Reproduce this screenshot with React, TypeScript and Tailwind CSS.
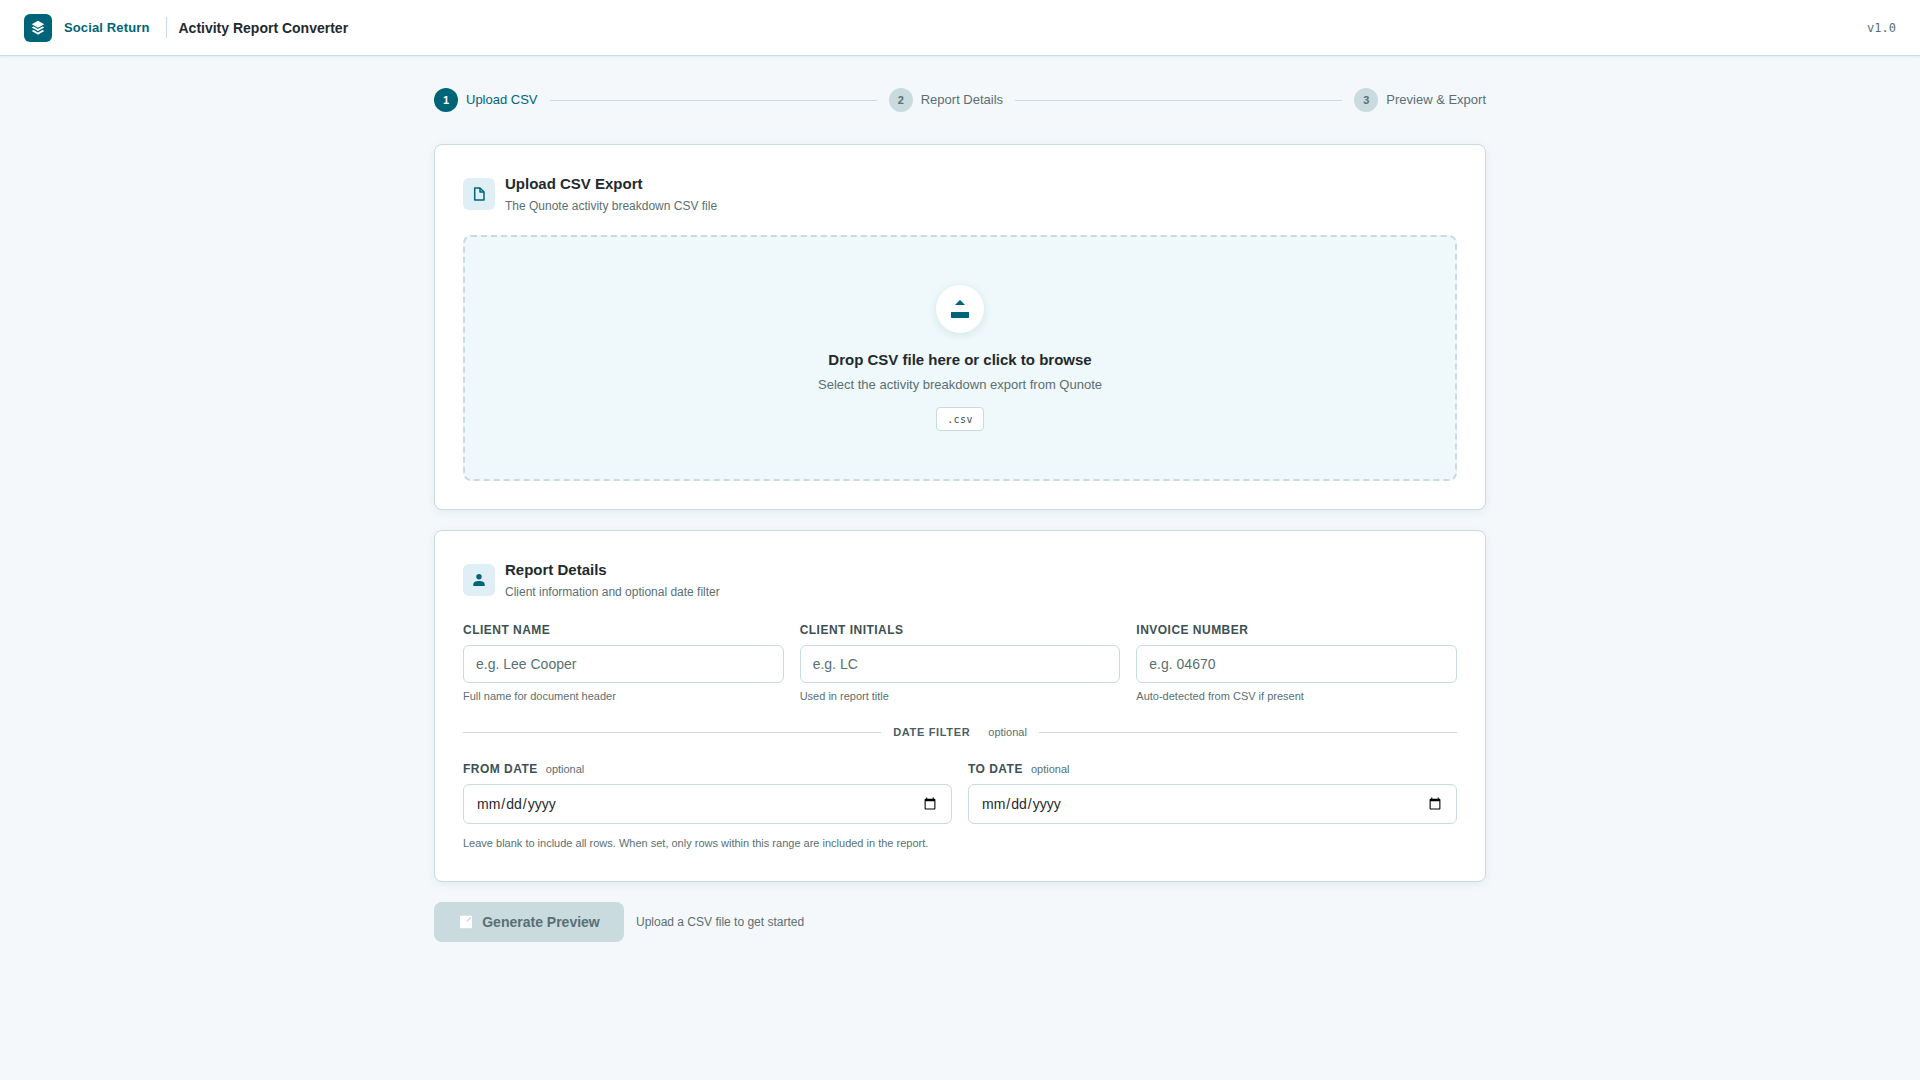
const font = { fontFamily: '"Liberation Sans", Arial, sans-serif' };
const mono = { fontFamily: '"DejaVu Sans Mono", monospace' };

function LogoIcon() {
	return (
		<svg width="16" height="16" viewBox="0 0 16 16" fill="#fff">
			<path d="M8 .7 14.3 4.2 8 7.7 1.7 4.2z" />
			<path d="M3.6 6.4 8 8.9l4.4-2.5 1.9 1.1L8 11.1 1.7 7.5z" />
			<path d="M3.6 9.9 8 12.4l4.4-2.5 1.9 1.1L8 14.7 1.7 11z" />
		</svg>
	);
}

function FileIcon() {
	return (
		<svg width="16" height="16" viewBox="0 0 16 16" fill="none" stroke="#006478" strokeWidth="1.5">
			<path d="M3.7 2h5.3l4 4v8H3.7z" strokeLinejoin="round" />
			<path d="M9 2v4h4" strokeLinejoin="round" />
		</svg>
	);
}

function PersonIcon() {
	return (
		<svg width="16" height="16" viewBox="0 0 16 16" fill="#006478">
			<circle cx="8" cy="4.7" r="2.7" />
			<path d="M2.3 14v-1.6C2.3 10 4.8 9 8 9s5.7 1 5.7 3.4V14z" />
		</svg>
	);
}

function UploadIcon() {
	return (
		<svg width="20" height="20" viewBox="0 0 20 20" fill="#006478">
			<path d="M9.4 1.4a.8.8 0 0 1 1.2 0L15 6H5z" />
			<path d="M1 13h18v5.2a.8.8 0 0 1-.8.8H1.8a.8.8 0 0 1-.8-.8z" />
		</svg>
	);
}

function PreviewIcon() {
	return (
		<svg width="14" height="14" viewBox="0 0 14 14">
			<rect x="1" y="0.7" width="12" height="12.6" rx="1" fill="#fff" />
			<path d="M7.5 6.5 12 2.5" stroke="#c9dbde" strokeWidth="1.4" />
		</svg>
	);
}

function Step({ n, label, active }: { n: number; label: string; active?: boolean }) {
	return (
		<div className="flex items-center gap-2">
			<div
				className={
					active
						? "flex h-6 w-6 items-center justify-center rounded-full bg-[#006478] text-[11px] font-bold text-white"
						: "flex h-6 w-6 items-center justify-center rounded-full bg-[#c9dbde] text-[11px] font-bold text-[#5a6f73]"
				}>
				{n}
			</div>
			<span className={active ? "text-[13px] text-[#006478]" : "text-[13px] text-[#5a6f73]"}>{label}</span>
		</div>
	);
}

function Card({ icon, title, sub, children }: { icon: React.ReactNode; title: string; sub: string; children: React.ReactNode }) {
	return (
		<section className="rounded-lg border border-[#c9dbde] bg-white p-7 shadow-[0_2px_8px_rgba(0,80,100,0.08)]">
			<div className="mb-5 flex items-center gap-[10px]">
				<div className="flex h-8 w-8 items-center justify-center rounded-md bg-[#e0eff5]">{icon}</div>
				<div>
					<h2 className="text-[15px] leading-[21px] font-bold text-[#1f2a2e]">{title}</h2>
					<p className="mt-[3px] text-xs leading-[18px] text-[#5a6f73]">{sub}</p>
				</div>
			</div>
			{children}
		</section>
	);
}

function TextField({ label, placeholder, hint }: { label: string; placeholder: string; hint: string }) {
	return (
		<div>
			<label className="mb-[6px] block text-xs leading-[18px] font-bold tracking-[0.04em] text-[#3d5054] uppercase">{label}</label>
			<input
				placeholder={placeholder}
				className="block h-[38px] w-full rounded-md border border-[#c9dbde] bg-white px-3 text-sm text-[#1f2a2e] outline-none placeholder:text-[#5a6f73]"
			/>
			<p className="mt-[6px] text-[11px] leading-[14px] text-[#5a6f73]">{hint}</p>
		</div>
	);
}

function DateField({ label }: { label: string }) {
	return (
		<div>
			<label className="mb-[6px] flex items-center gap-2 text-xs leading-[18px] font-bold tracking-[0.04em] text-[#3d5054]">
				<span className="uppercase">{label}</span>
				<span className="text-[11px] font-normal tracking-normal text-[#5a6f73]">optional</span>
			</label>
			<input
				type="date"
				className="block h-10 w-full rounded-md border border-[#c9dbde] bg-white px-3 text-sm text-[#1f2a2e] outline-none"
			/>
		</div>
	);
}

export default function App() {
	return (
		<div className="min-h-[1080px] bg-[#f4f8fb]" style={font}>
			<header className="flex h-14 items-center justify-between border-b border-[#c9dbde] bg-white px-6 shadow-[0_1px_3px_rgba(0,80,100,0.08)]">
				<div className="flex items-center">
					<div className="flex h-7 w-7 items-center justify-center rounded-md bg-[#006478]">
						<LogoIcon />
					</div>
					<span className="ml-3 text-[13px] font-bold tracking-[0.01em] text-[#006478]">Social Return</span>
					<div className="mr-3 ml-4 h-[21px] w-px bg-[#c9dbde]" />
					<span className="text-sm font-bold text-[#1f2a2e]">Activity Report Converter</span>
				</div>
				<span className="pt-px text-xs text-[#5a6f73]" style={mono}>
					v1.0
				</span>
			</header>

			<main className="mx-auto w-[1052px] pt-8">
				<div className="mb-8 flex items-center gap-3">
					<Step n={1} label="Upload CSV" active />
					<div className="h-px flex-1 bg-[#c9dbde]" />
					<Step n={2} label="Report Details" />
					<div className="h-px flex-1 bg-[#c9dbde]" />
					<Step n={3} label="Preview & Export" />
				</div>

				<div className="flex flex-col gap-5">
					<Card icon={<FileIcon />} title="Upload CSV Export" sub="The Qunote activity breakdown CSV file">
						<div className="flex h-[246px] flex-col items-center justify-center rounded-lg border-2 border-dashed border-[#c9dbde] bg-[#eff8fa]">
							<div className="mb-4 flex h-12 w-12 items-center justify-center rounded-full bg-white shadow-[0_2px_8px_rgba(0,100,120,0.12)]">
								<UploadIcon />
							</div>
							<p className="text-[15px] leading-[21px] font-bold text-[#1f2a2e]">Drop CSV file here or click to browse</p>
							<p className="mt-[5px] text-[13px] leading-[20px] text-[#5a6f73]">Select the activity breakdown export from Qunote</p>
							<span
								className="mt-3 flex h-6 w-12 items-center justify-center rounded border border-[#c9dbde] bg-white text-[10px] tracking-[0.04em] text-[#3d5054]"
								style={mono}>
								.csv
							</span>
						</div>
					</Card>

					<Card icon={<PersonIcon />} title="Report Details" sub="Client information and optional date filter">
						<div className="grid grid-cols-3 gap-4">
							<TextField label="Client Name" placeholder="e.g. Lee Cooper" hint="Full name for document header" />
							<TextField label="Client Initials" placeholder="e.g. LC" hint="Used in report title" />
							<TextField label="Invoice Number" placeholder="e.g. 04670" hint="Auto-detected from CSV if present" />
						</div>
						<div className="mt-[22px] mb-[21px] flex h-[14px] items-center gap-3">
							<div className="h-px flex-1 bg-[#c9dbde]" />
							<span className="text-[11px] font-bold tracking-[0.06em] text-[#4a5f63]">DATE FILTER</span>
							<span className="ml-[6px] text-[11px] text-[#5a6f73]">optional</span>
							<div className="h-px flex-1 bg-[#c9dbde]" />
						</div>
						<div className="grid grid-cols-2 gap-4">
							<DateField label="From Date" />
							<DateField label="To Date" />
						</div>
						<p className="mt-[9px] text-[11px] leading-[20px] text-[#5a6f73]">
							Leave blank to include all rows. When set, only rows within this range are included in the report.
						</p>
					</Card>
				</div>

				<div className="mt-5 flex items-center gap-3">
					<button className="flex h-10 w-[190px] items-center justify-center gap-[9px] rounded-lg bg-[#c9dbde] pl-px text-sm font-bold text-[#5a6f73]">
						<PreviewIcon />
						Generate Preview
					</button>
					<span className="text-xs text-[#5a6f73]">Upload a CSV file to get started</span>
				</div>
			</main>
		</div>
	);
}
